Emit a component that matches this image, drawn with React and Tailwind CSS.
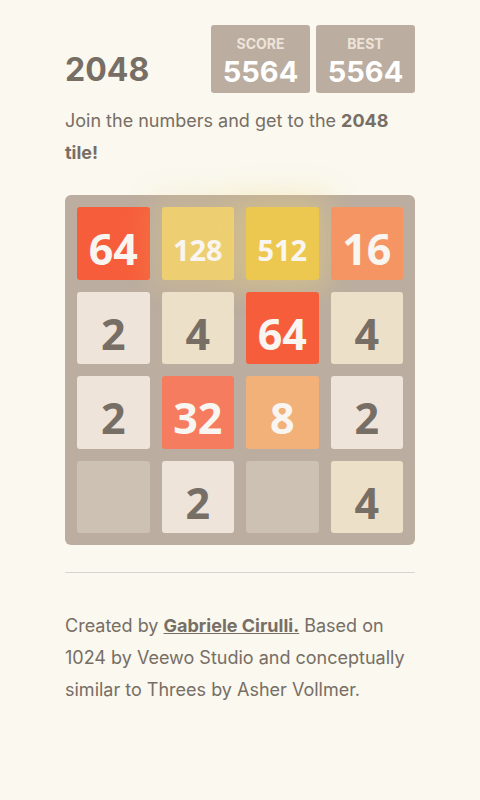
import React from 'react';

const board = [
  [64, 128, 512, 16],
  [2, 4, 64, 4],
  [2, 32, 8, 2],
  [0, 2, 0, 4],
];

const tileStyle = (v) => {
  switch (v) {
    case 2: return 'bg-[#eee4da] text-[#776e65] text-[43px]';
    case 4: return 'bg-[#ede0c8] text-[#776e65] text-[43px]';
    case 8: return 'bg-[#f2b179] text-[#f9f6f2] text-[43px]';
    case 16: return 'bg-[#f59563] text-[#f9f6f2] text-[43px]';
    case 32: return 'bg-[#f67c5f] text-[#f9f6f2] text-[43px]';
    case 64: return 'bg-[#f65e3b] text-[#f9f6f2] text-[43px]';
    case 128: return 'bg-[#edcf72] text-[#f9f6f2] text-[29px] pt-[4px] shadow-[0_0_30px_10px_rgba(243,215,116,0.24)]';
    case 512: return 'bg-[#edc850] text-[#f9f6f2] text-[29px] pt-[4px] shadow-[0_0_30px_10px_rgba(243,215,116,0.4)]';
    default: return 'bg-[#cdc1b4]';
  }
};

const ScoreBox = ({ label, value }) => (
  <div className="w-[99px] h-[68px] bg-[#bbada0] rounded-[3px] flex flex-col items-center pt-[11px]">
    <span className="text-[14px] leading-[16px] font-bold text-[#eee4da] uppercase">{label}</span>
    <span className="mt-[3px] text-[29px] leading-[34px] font-bold text-white">{value}</span>
  </div>
);

export default function App() {
  return (
    <div className="min-h-screen bg-[#faf8ef] text-[#776e65] font-['Inter',sans-serif]">
      <div className="w-[350px] mx-auto pt-[25px]">
        {/* Header */}
        <div className="flex items-center justify-between">
          <h1 className="text-[32px] font-bold leading-none mt-[22px]">2048</h1>
          <div className="flex gap-[6px]">
            <ScoreBox label="Score" value="5564" />
            <ScoreBox label="Best" value="5564" />
          </div>
        </div>

        <p className="mt-[12px] text-[18px] leading-[32px]">
          Join the numbers and get to the <strong>2048 tile!</strong>
        </p>

        {/* Board */}
        <div className="mt-[26px] w-[350px] h-[350px] bg-[#bbada0] rounded-[6px] p-[12px] grid grid-cols-4 grid-rows-4 gap-[12px]">
          {board.flat().map((v, i) => (
            <div
              key={i}
              className={`rounded-[3px] flex items-center justify-center pt-[12px] font-bold font-['Open_Sans',sans-serif] ${tileStyle(v)}`}
            >
              {v ? v : ''}
            </div>
          ))}
        </div>

        <hr className="mt-[27px] border-t border-[#d8d4d0]" />

        <p className="mt-[37px] text-[18px] leading-[32px]">
          Created by <a className="font-bold underline" href="#">Gabriele Cirulli.</a> Based on 1024 by Veewo Studio and conceptually similar to Threes by Asher Vollmer.
        </p>
      </div>
    </div>
  );
}
